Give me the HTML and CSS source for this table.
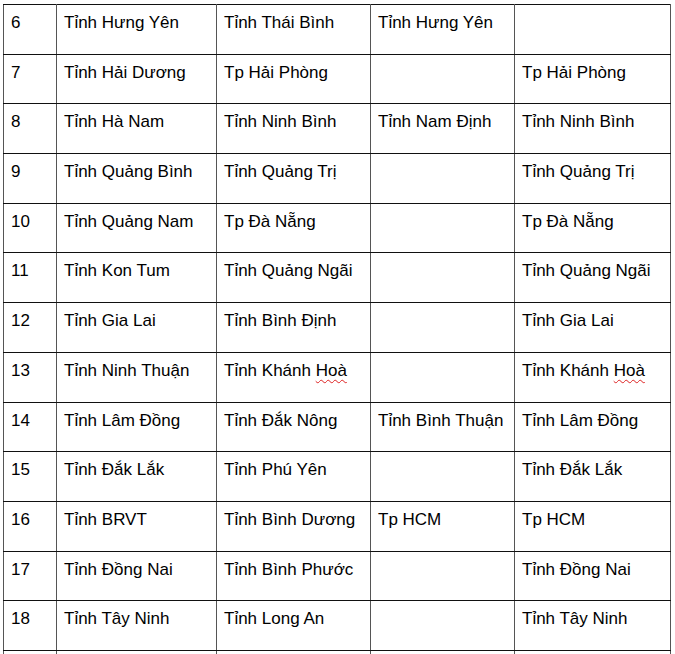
FILE: index.html
```html
<!DOCTYPE html>
<html lang="vi">
<head>
<meta charset="utf-8">
<link rel="stylesheet" href="styles.css">
</head>
<body>
<div class="page">
<table class="grid">
<colgroup>
<col class="c1"><col class="c2"><col class="c3"><col class="c4"><col class="c5">
</colgroup>
<tbody>
<tr><td>6</td><td>Tỉnh Hưng Yên</td><td>Tỉnh Thái Bình</td><td>Tỉnh Hưng Yên</td><td></td></tr>
<tr><td>7</td><td>Tỉnh Hải Dương</td><td>Tp Hải Phòng</td><td></td><td>Tp Hải Phòng</td></tr>
<tr><td>8</td><td>Tỉnh Hà Nam</td><td>Tỉnh Ninh Bình</td><td>Tỉnh Nam Định</td><td>Tỉnh Ninh Bình</td></tr>
<tr><td>9</td><td>Tỉnh Quảng Bình</td><td>Tỉnh Quảng Trị</td><td></td><td>Tỉnh Quảng Trị</td></tr>
<tr><td>10</td><td>Tỉnh Quảng Nam</td><td>Tp Đà Nẵng</td><td></td><td>Tp Đà Nẵng</td></tr>
<tr><td>11</td><td>Tỉnh Kon Tum</td><td>Tỉnh Quảng Ngãi</td><td></td><td>Tỉnh Quảng Ngãi</td></tr>
<tr><td>12</td><td>Tỉnh Gia Lai</td><td>Tỉnh Bình Định</td><td></td><td>Tỉnh Gia Lai</td></tr>
<tr><td>13</td><td>Tỉnh Ninh Thuận</td><td>Tỉnh Khánh <span class="spell">Hoà</span></td><td></td><td>Tỉnh Khánh <span class="spell">Hoà</span></td></tr>
<tr><td>14</td><td>Tỉnh Lâm Đồng</td><td>Tỉnh Đắk Nông</td><td>Tỉnh Bình Thuận</td><td>Tỉnh Lâm Đồng</td></tr>
<tr><td>15</td><td>Tỉnh Đắk Lắk</td><td>Tỉnh Phú Yên</td><td></td><td>Tỉnh Đắk Lắk</td></tr>
<tr><td>16</td><td>Tỉnh BRVT</td><td>Tỉnh Bình Dương</td><td>Tp HCM</td><td>Tp HCM</td></tr>
<tr><td>17</td><td>Tỉnh Đồng Nai</td><td>Tỉnh Bình Phước</td><td></td><td>Tỉnh Đồng Nai</td></tr>
<tr><td>18</td><td>Tỉnh Tây Ninh</td><td>Tỉnh Long An</td><td></td><td>Tỉnh Tây Ninh</td></tr>
<tr><td>&nbsp;</td><td></td><td></td><td></td><td></td></tr>
</tbody>
</table>
</div>
</body>
</html>
```

FILE: styles.css
```css
html, body {
  margin: 0;
  padding: 0;
  background: #fff;
}
.page {
  padding: 4px 0 0 3px;
  height: 654px;
  overflow: hidden;
}
.grid {
  border-collapse: collapse;
  table-layout: fixed;
  width: 667px;
  font-family: "Liberation Sans", Arial, sans-serif;
  font-size: 17px;
  color: #000;
}
.c1 { width: 53px; }
.c2 { width: 160px; }
.c3 { width: 154px; }
.c4 { width: 144px; }
.c5 { width: 156px; }
.grid td {
  height: 49.7px;
  box-sizing: border-box;
  padding: 8px 7px 0 7px;
  vertical-align: top;
  border-top: 1px solid #111;
  border-bottom: 1px solid #111;
  border-left: 1px solid #555;
  border-right: 1px solid #555;
  white-space: nowrap;
  line-height: 19px;
}
.spell {
  text-decoration: underline wavy #d22;
  text-decoration-thickness: 1px;
  text-underline-offset: 3px;
}
```
